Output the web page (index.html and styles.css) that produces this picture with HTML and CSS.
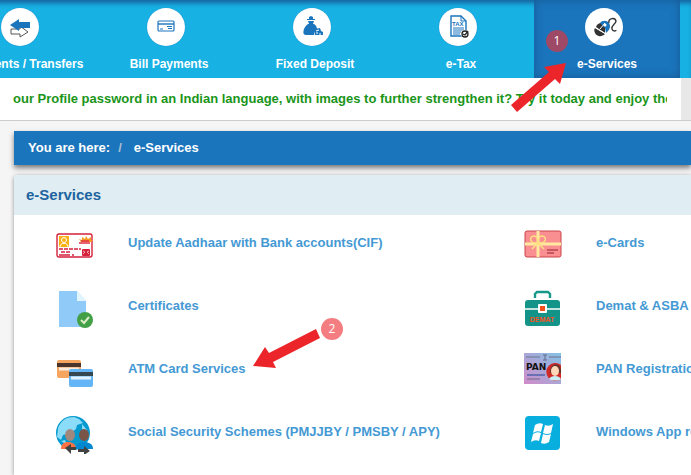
FILE: index.html
```html
<!DOCTYPE html>
<html lang="en">
<head>
    <meta charset="UTF-8" />
    <title>e-Services</title>
    <link rel="stylesheet" href="styles.css">
</head>
<body>
    <nav class="main-nav">
        <a href="#" class="nav-item">
            <span class="nav-icon">
                <svg width="38" height="38" viewBox="0 0 38 38">
                    <path d="M10 21h9v-3l8 6-8 5v-3H10z" fill="#fff" stroke="#555" stroke-width="1" />
                    <path d="M9 17l9-6v3h11v6H18v3z" fill="#1b75bc" />
                </svg>
            </span>
            <span>Payments / Transfers</span>
        </a>
        <a href="#" class="nav-item">
            <span class="nav-icon">
                <svg width="38" height="38" viewBox="0 0 38 38">
                    <rect x="11" y="13" width="16" height="10" rx="1" fill="#fff" stroke="#1b75bc" stroke-width="1.2" />
                    <path d="M11 16h16" stroke="#1b75bc" stroke-width="1.4" />
                    <path d="M13 21h3M20 18.500h5M21 20.500h4" stroke="#1b75bc" />
                </svg>
            </span>
            <span>Bill Payments</span>
        </a>
        <a href="#" class="nav-item">
            <span class="nav-icon">
                <svg width="38" height="38" viewBox="0 0 38 38" fill="#1b75bc">
                    <path d="M16 9l2-1 2 1v2h2v1h-8v-1h2zM15 13h6l-1 3h-4z" />
                    <path d="M15 16h6c3 2 3 4 3 6l-2 1-1 4H13c-3 0-3-3-2-6 1-2 2-4 4-5z" />
                    <path d="M22 21l5-1 1 3 2 1v3h-8v-3h-1z" />
                    <path d="M23 23l3-1M24 26v-2M27 27v-2" stroke="#fff" />
                </svg>
            </span>
            <span>Fixed Deposit</span>
        </a>
        <a href="#" class="nav-item">
            <span class="nav-icon">
                <svg width="38" height="38" viewBox="0 0 38 38">
                    <path d="M12 8h10l5 5v15H12z" fill="#fff" stroke="#1b75bc" stroke-width="1.4" />
                    <path d="M22 8v5h5" fill="none" stroke="#1b75bc" />
                    <text x="13" y="18" class="tax-text">TAX</text>
                    <path d="M14 20h11M14 22h11M14 24h8M14 26h7" stroke="#1b75bc" />
                    <circle cx="26" cy="26" r="4" fill="#fff" />
                    <circle cx="26" cy="26" r="3" fill="#fff" stroke="#222" stroke-width="1.3" />
                    <path d="M24 26l2 1 3-4" fill="none" stroke="#222" stroke-width="1.3" />
                </svg>
            </span>
            <span>e-Tax</span>
        </a>
        <a href="#" class="nav-item active">
            <span class="nav-icon">
                <svg width="38" height="38" viewBox="0 0 38 38">
                    <path d="M10 20l10 6c-3 3-8 3-10-1-1-2-1-4 0-5z" fill="#333" />
                    <path d="M11 19c1-3 3-4 5-4l4 4v6z" fill="#333" />
                    <path d="M15 15c2-3 7-3 9 0s1 7-3 10l-1-5z" fill="#1b75bc" />
                    <path d="M10 19.500l11 6.500M15 21l5-6" stroke="#fff" />
                    <circle cx="20" cy="17" r="1.500" fill="#fff" />
                    <path d="M24 15c-1-5 6-6 7-2 0 3-5 4-4 8 1 3 4 2 4 1" fill="none" stroke="#333" stroke-width="1.4" />
                </svg>
            </span>
            <span>e-Services</span>
        </a>
        <a href="#" class="nav-item" aria-label="More"></a>
    </nav>

    <div class="news">
        <div class="news-text"><span>our Profile password in an Indian language, with images to further strengthen it? Try it today and enjoy the</span></div>
    </div>

    <div class="page">
        <aside class="side-panel"></aside>
        <main class="content">
            <div class="breadcrumb">
                <span>You are here:</span>
                <span class="divider">/</span>
                <a href="#">e-Services</a>
            </div>

            <section class="panel">
                <h1>e-Services</h1>
                <div class="services">
                    <a href="#" class="service">
                        <svg width="38" height="38" viewBox="0 0 38 38">
                            <rect x="1" y="7" width="35" height="23" rx="2" fill="#fff" stroke="#d5213c" stroke-width="1.4" />
                            <rect x="3" y="9" width="10" height="11" fill="#fbb216" />
                            <circle cx="8" cy="13" r="2.5" fill="#fbb216" stroke="#fff" />
                            <path d="M4 20c0-5 8-5 8 0" fill="none" stroke="#fff" />
                            <path d="M25 15l-2-3 3 1 0-3 3 2 1-3 2 3 3-2 0 3 2 0-2 2z" fill="#f59a23" />
                            <path d="M25 14h8M23 16h11" stroke="#e03143" stroke-width="1.4" />
                            <path d="M3 22h22M5 25h9" stroke="#d5213c" stroke-width="1.4" stroke-dasharray="4 1" />
                            <path d="M3 28h11M16 28h2" stroke="#d5213c" stroke-width="1.4" />
                            <rect x="26" y="22" width="8" height="7" rx="1" fill="#d5213c" />
                            <path d="M27 24l2 1-2 2M33 24l-2 1 2 2" fill="none" stroke="#f3aab4" />
                        </svg>
                        <span>Update Aadhaar with Bank accounts(CIF)</span>
                    </a>
                    <a href="#" class="service">
                        <svg width="38" height="38" viewBox="0 0 38 38">
                            <path d="M3 1h18l9 10v26H3z" fill="#90caf9" />
                            <path d="M21 1l9 10h-9z" fill="#e1f5fe" />
                            <circle cx="29" cy="30" r="8" fill="#43a047" />
                            <path d="M25 30l3 3 5-6" fill="none" stroke="#dcedc8" stroke-width="2" />
                        </svg>
                        <span>Certificates</span>
                    </a>
                    <a href="#" class="service">
                        <svg width="38" height="38" viewBox="0 0 38 38">
                            <rect x="1" y="7" width="24" height="18" rx="2" fill="#f5a55f" />
                            <path d="M1 12h24" stroke="#4a342c" stroke-width="4" />
                            <path d="M3 16h20" stroke="#fdebdc" stroke-width="3" />
                            <rect x="13" y="16" width="24" height="18" rx="2" fill="#64b5f6" />
                            <path d="M13 21h24" stroke="#37474f" stroke-width="4" />
                            <path d="M15 25h20" stroke="#e3f2fd" stroke-width="3" />
                        </svg>
                        <span>ATM Card Services</span>
                    </a>
                    <a href="#" class="service">
                        <svg width="38" height="38" viewBox="0 0 38 38">
                            <circle cx="17" cy="17" r="17" fill="#0499cf" />
                            <path d="M2 12C5 4 11 1 18 1l5 2 4 4-6 2-1 4-4 3-3 5-2-3-4 1-2 5-4-3z" fill="#8adcf8" />
                            <path d="M26 8l5 6 2 7-4-3-3-5zM5 25l4-1 2 5z" fill="#8adcf8" />
                            <path d="M5 33c0-5 3-7 7-7s8 2 8 7z" fill="#ff7043" />
                            <path d="M20 33c0-5 3-7 8-7s9 2 9 7z" fill="#0288d1" />
                            <ellipse cx="14" cy="19" rx="5" ry="6" fill="#a1887f" />
                            <ellipse cx="28" cy="19" rx="5" ry="6" fill="#795548" />
                            <path d="M9 32l6-4v3h5v3h-5v4zM34 35l-6 4v-3h-6v-3h6v-3z" fill="#424242" />
                        </svg>
                        <span>Social Security Schemes (PMJJBY / PMSBY / APY)</span>
                    </a>
                    <a href="#" class="service">
                        <svg width="38" height="38" viewBox="0 0 38 38">
                            <rect x="1" y="4" width="36" height="26" rx="2" fill="#f98f91" stroke="#ca444c" />
                            <path d="M1 17h36M14 4v26" stroke="#ffe9a0" stroke-width="3" />
                            <path d="M14 16c-9 1-9-7-4-7 3 0 4 4 4 7 0-3 1-7 4-7 5 0 5 8-4 7l-6 6M14 16l6 6" fill="none" stroke="#ffe082" stroke-width="1.5" />
                            <path d="M23 23h11M23 26h7" stroke="#b74751" stroke-width="1.4" />
                        </svg>
                        <span>e-Cards</span>
                    </a>
                    <a href="#" class="service">
                        <svg width="38" height="38" viewBox="0 0 38 38">
                            <path d="M11 8V4l2-2h11l2 2v4" fill="none" stroke="#17998a" stroke-width="2.4" />
                            <rect x="1" y="10" width="35" height="26" rx="3" fill="#149488" />
                            <path d="M1 19h35" stroke="#fff" stroke-width="1.4" />
                            <rect x="14" y="14" width="9" height="9" rx="1" fill="#fff" />
                            <rect x="16" y="16" width="5" height="5" fill="#f4511e" />
                            <text x="18" y="32" text-anchor="middle" class="demat-text">DEMAT</text>
                        </svg>
                        <span>Demat &amp; ASBA</span>
                    </a>
                    <a href="#" class="service">
                        <svg width="38" height="38" viewBox="0 0 38 38">
                            <defs>
                                <linearGradient id="pan" x1="0" y1="1" x2="1" y2="0">
                                    <stop offset="0" stop-color="#d18bc9" />
                                    <stop offset="1" stop-color="#84c2e5" />
                                </linearGradient>
                            </defs>
                            <rect x="0" y="0" width="37" height="31" fill="url(#pan)" />
                            <path d="M2 4h14M25 4h12" stroke="#7c89a8" stroke-width="1.5" />
                            <path d="M19 2h4M21 2v5M19 7h4" stroke="#626d88" />
                            <text x="2" y="17" class="pan-text">PAN</text>
                            <path d="M3 22h18" stroke="#5262a9" stroke-width="1.5" />
                            <path d="M3 26h13" stroke="#8b789f" stroke-width="1.5" />
                            <path d="M37 12v14a9 9 0 1 1 0-14z" fill="#cf2a27" />
                            <path d="M26 20c0-12 12-11 11 0z" fill="#62352e" />
                            <ellipse cx="31" cy="18" rx="4" ry="5" fill="#ffd8b8" />
                            <path d="M25 26c2-4 10-4 12 0-2 2-9 2-12 0z" fill="#c9eef5" />
                        </svg>
                        <span>PAN Registration</span>
                    </a>
                    <a href="#" class="service">
                        <svg width="38" height="38" viewBox="0 0 38 38">
                            <rect x="1" y="0" width="35" height="34" rx="4" fill="#08aedd" />
                            <path d="M11 9q4-3 8-1l-2 8q-4-2-8 1zM21 9q4 2 8-1l-2 9q-4 2-8 0zM9 18q4-3 8-1l-2 8q-4-2-8 1zM19 18q4 2 8 0l-2 8q-4 3-8 1z" fill="#fff" />
                        </svg>
                        <span>Windows App registration</span>
                    </a>
                </div>
            </section>
        </main>
    </div>

    <!-- Step markers -->
    <svg class="arrow arrow-one" width="56" height="50" viewBox="0 0 56 50">
        <path d="M55 0L33 4l5 5L0 42l6 7 38-33 5 5z" />
    </svg>
    <span class="step step-one">1</span>
    <svg class="arrow arrow-two" width="68" height="41" viewBox="0 0 68 41">
        <path d="M0 38l12-19 4 6 47-24 4 9-47 24 3 6z" />
    </svg>
    <span class="step step-two">2</span>
</body>
</html>
```
FILE: styles.css
```css
* {
    margin: 0;
    padding: 0;
    box-sizing: border-box;
}

body {
    position: relative;
    min-height: 100vh;
    display: flex;
    flex-direction: column;
    font-family: 'Liberation Sans', Arial, sans-serif;
    font-size: 13px;
    font-weight: bold;
    background: #f5f5f5;
    overflow: hidden;
}

a {
    color: inherit;
    text-decoration: none;
}

/* Top navigation */
.main-nav {
    display: flex;
    height: 78px;
    margin-left: -50px; /* first tab is scrolled partly out of view */
    background: #17b1e4;
    box-shadow: inset 0 5px 5px -2px #17609c;
    font-size: 12px;
    overflow: hidden;
}

.nav-item {
    flex: none;
    width: 146px;
    padding-top: 8px;
    display: flex;
    flex-direction: column;
    align-items: center;
    gap: 10px;
    color: #fff;
    line-height: 16px;
    white-space: nowrap;
}

.nav-item.active {
    background: #1b75bc;
    box-shadow: inset 0 0 10px #155a94;
}

.nav-icon {
    width: 38px;
    height: 38px;
    margin-right: 6px;
    border-radius: 50%;
    background: #fff;
    box-shadow: 0 0 1px #1b75bc;
}

.nav-icon svg {
    display: block;
}

.tax-text {
    font-size: 6px;
    fill: #1b75bc;
}

/* Scrolling news line */
.news {
    padding-right: 10px;
    background: #e8e8e8;
    border-bottom: 1px solid #ccc;
}

.news-text {
    padding: 0 14px 0 13px;
    background: #fff;
    color: #1a951a;
    line-height: 42px;
    white-space: nowrap;
}

.news-text span {
    display: block;
    overflow: hidden;
}

/* Page content */
.page {
    flex: 1;
    display: flex;
    gap: 14px;
    padding-top: 10px;
}

.side-panel {
    width: 0;
    margin-top: 48px;
    box-shadow: 0 0 3px #999;
}

.content {
    flex: 1;
    min-width: 0;
    display: flex;
    flex-direction: column;
    gap: 10px;
}

.breadcrumb {
    display: flex;
    gap: 8px;
    padding: 0 14px;
    background: #1b75bc;
    color: #fff;
    line-height: 34px;
    box-shadow: 0 3px 5px rgba(0, 0, 0, 0.5);
}

.divider {
    margin-right: 4px;
    color: #a9bfd3;
}

.panel {
    flex: 1;
    background: #fff;
    border-radius: 4px 0 0 0;
    box-shadow: 0 1px 4px rgba(0, 0, 0, 0.4);
    overflow: hidden;
}

.panel h1 {
    padding: 0 12px;
    background: #e0edf2;
    color: #1c649f;
    font-size: 15px;
    line-height: 40px;
}

.services {
    display: grid;
    grid-template-columns: repeat(2, 468px);
    grid-template-rows: repeat(4, 63px);
    grid-auto-flow: column;
    padding: 0 42px;
}

.service {
    display: flex;
    align-items: center;
    gap: 34px;
    padding-bottom: 2px;
    color: #4499d4;
    white-space: nowrap;
}

.service span {
    padding-bottom: 6px;
}

.demat-text {
    font-size: 7px;
    fill: #f4511e;
}

.pan-text {
    font-family: 'DejaVu Sans', sans-serif;
    font-size: 9px;
    fill: #111;
}

/* Step markers lie over the page */
.arrow {
    position: absolute;
    fill: #eb2529;
}

.arrow-one {
    left: 511px;
    top: 63px;
}

.arrow-two {
    left: 253px;
    top: 328px;
}

.step {
    position: absolute;
    width: 22px;
    height: 22px;
    border-radius: 50%;
    color: #fff;
    font: 12px/22px 'Open Sans', sans-serif;
    text-align: center;
}

.step-one {
    left: 546px;
    top: 30px;
    background: #9e4a67;
}

.step-two {
    left: 321px;
    top: 318px;
    background: #f47d81;
}
```
